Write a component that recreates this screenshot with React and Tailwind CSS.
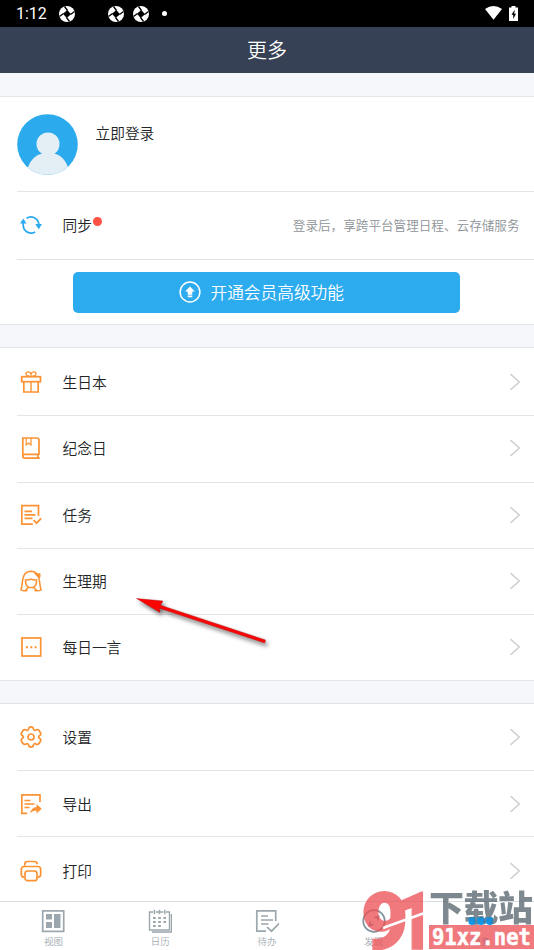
import React from "react";

const ORANGE = "#fb9233";

function Svg({ children, className = "w-[22px] h-[22px]", stroke = ORANGE, box = "0 0 22 22", width = 1.7 }) {
  return (
    <svg viewBox={box} className={`block shrink-0 ${className}`} fill="none" stroke={stroke} strokeWidth={width}>
      {children}
    </svg>
  );
}

const GiftIcon = () => (
  <Svg>
    <rect x="1.7" y="5.7" width="18.8" height="5" />
    <path d="M3.8 10.7V21h14.4V10.7" />
    <path d="M11 10.700V21M11 5.5C9 5.5 6 4.8 6 2.6 6 .2 10.2.3 11 3.2 11.8.3 16 .2 16 2.6c0 2.2-3 2.9-5 2.9z" strokeWidth="1.4" />
  </Svg>
);
const BookIcon = () => (
  <Svg>
    <path d="M19 17.8V3.2Q19 1 16.8 1H2.8v18.2q0 1.9 2 1.9H19.8M2.8 19q0-1.6 2-1.6H19.3M18 17.5V21" />
    <path d="M6.2 1v7L8.600 6 11 8V1" strokeWidth="1.2" />
  </Svg>
);
const TaskIcon = () => (
  <Svg>
    <path d="M18.5 12V1.700H1.8v18.500h11M4.500 7.300h7.500M4.500 10.800h11M4.500 14.300h8M13.500 16l3 3.200 4.700-4.800" />
  </Svg>
);
const GirlIcon = () => (
  <Svg>
    <path d="M7.500 20.300c-2 .8-5 .4-6.700-.5C3.500 15.500.2 1.500 11 1.300c10.800.2 7.500 14.200 10.200 18.500-1.700.9-4.700 1.300-6.700.5" strokeWidth="1.500" />
    <path d="M5.500 10q1.500.3 3-.3 2.500-.8 5 0 1.500.6 3 .3c.3 3.500-1 6.300-3.400 7.500H8.900C6.500 16.300 5.200 13.500 5.500 10zM5.500 20l3-2.500M16.500 20l-3-2.500" strokeWidth="1.500" />
    <path d="M14.300 2.500l3.300 1.500 2.500-.2-.2 3.700-3.100-1.500z" fill={ORANGE} strokeWidth="1" />
  </Svg>
);
const QuoteIcon = () => (
  <Svg>
    <rect x="2" y="2" width="18.700" height="18" />
    <path d="M6 11.200h2M10.300 11.200h2M14.600 11.200h2" strokeWidth="2" />
  </Svg>
);
const GearIcon = () => (
  <Svg>
    <path strokeLinejoin="round" d="M8.600 2.800Q8.800.9 11 .9T13.400 2.800Q13.800 4.800 15.700 4.100 17.700 3.100 18.900 4.300L20.700 7.200Q21.200 8.800 19.400 9.700 17.900 11 19.400 12.300 21.200 13.200 20.700 14.800L18.900 17.700Q17.700 18.900 15.700 17.900 13.800 17.200 13.400 19.200 13.200 21.100 11 21.100T8.600 19.200Q8.200 17.200 6.300 17.900 4.300 18.900 3.100 17.700L1.300 14.800Q.8 13.200 2.600 12.300 4.100 11 2.600 9.700.8 8.800 1.300 7.200L3.100 4.300Q4.300 3.100 6.300 4.100 8.200 4.800 8.600 2.800z" />
    <circle cx="11" cy="11" r="3" />
  </Svg>
);
const ExportIcon = () => (
  <Svg>
    <path d="M20 9V1.800H1.800v18.500h5.500M4.500 7.500h6M4.500 11h10M4.500 14.500h5" />
    <path d="M9.800 20q2.200-5.500 6.700-6v-3l5.200 4.800-5.200 4.700v-3q-3.500-.2-6.700 2.500z" fill={ORANGE} stroke="none" />
  </Svg>
);
const PrintIcon = () => (
  <Svg>
    <path d="M4.800 5.500V4.200q0-2.700 2.700-2.700h7q2.700 0 2.700 2.700M4 17.200q-2.700-.3-2.700-3V9.500q0-3 3-3h13.400q3 0 3 3v4.700q0 2.700-2.700 3" />
    <rect x="5" y="11" width="12" height="9.700" rx="2.500" />
  </Svg>
);

function Chevron() {
  return (
    <Svg className="w-[12px] h-[18px]" stroke="#cfd1d3" box="0 0 12 18" width={1.600}>
      <path d="M1.500 1.200L10.300 9 1.500 16.800" />
    </Svg>
  );
}

function Row({ icon, label, height, last, pad = "pb-px" }) {
  return (
    <div className={`${height} shrink-0 ${last ? "border-b border-[#e2e5e8]" : ""} pl-[17px]`}>
      <div className={`h-full flex items-center pl-[3px] pr-[13px] ${pad} ${last ? "" : "border-b border-[#e2e5e8]"}`}>
        {icon}
        <span className="ml-[20.500px] grow text-[14.700px] leading-5">{label}</span>
        <Chevron />
      </div>
    </div>
  );
}

function Aperture({ className = "" }) {
  return (
    <svg viewBox="0 0 16 16" className={`w-4 h-4 ${className}`}>
      <circle cx="8" cy="8" r="8" fill="#fff" />
      <path d="M8.300 4L12 8.300 7.700 12 4 7.700z" fill="#000" />
      <path d="M8.500 4.500L5.500.5M11.500 8.500L15.500 5.500M7.500 11.500L10.500 15.500M4.500 7.500L.5 10.500" stroke="#000" strokeWidth="1.300" fill="none" />
    </svg>
  );
}

function StatusBar() {
  return (
    <div className="h-[27px] shrink-0 bg-black flex items-center pl-4 pr-[16px] text-white">
      <span className="w-[43px] font-['Roboto'] text-[16px] font-normal leading-5">1:12</span>
      <Aperture />
      <Aperture className="ml-[33px]" />
      <Aperture className="ml-[8.500px]" />
      <span className="ml-[13.500px] w-[5px] h-[5px] rounded-full bg-white" />
      <span className="grow" />
      <svg viewBox="0 0 17 14" className="w-[17px] h-[14px] mb-px">
        <path d="M0 3Q8.500-2.800 17 3L8.500 13.800z" fill="#fff" />
      </svg>
      <svg viewBox="0 0 9 15" className="w-[9px] h-[15px] ml-[7px] mb-px">
        <path d="M2.500 0h4v1.500H9V15H0V1.500h2.500z" fill="#fff" />
        <path d="M5.700 3.800L2.500 8.700h1.700V13L7 7.800H5.300z" fill="#000" />
      </svg>
    </div>
  );
}

function Tab({ label, children }) {
  return (
    <div className="flex-1 flex flex-col items-center pt-[7px] text-[#a2acb2]">
      {children}
      <span className="mt-px text-[9.500px] leading-[14px]">{label}</span>
    </div>
  );
}

function TabBar() {
  const c = "#9ba7ad";
  const size = "w-6 h-6";
  const box = "0 0 24 24";
  return (
    <div className="h-[49px] shrink-0 border-t border-[#d8dde1] bg-white flex">
      <Tab label="视图">
        <Svg className={size} stroke={c} box={box}>
          <rect x="1.700" y="1.900" width="21" height="20.500" />
          <path d="M5 5h6v5.500H5zM5 13h6v6H5zM13 5h6.500v14H13z" fill={c} stroke="none" />
        </Svg>
      </Tab>
      <Tab label="日历">
        <Svg className={size} stroke={c} box={box}>
          <path d="M5 3H1.500v18h20V3H18M7.500 3h8M6.300.8v4.400M11.500.8v4.400M16.800.8v4.400M23.500 5v18H4" strokeWidth="1.400" />
          <path d="M5 9h13M5 13h13M5 17h8.500" strokeWidth="2.200" strokeDasharray="2.700 2.500" />
        </Svg>
      </Tab>
      <Tab label="待办">
        <Svg className={size} stroke={c} box={box}>
          <path d="M20.700 12V1.900H1.800v20.300H11M6 7h7M6 11h12M6 15h7.500M12 18l4.500 4.200L24.500 14" />
        </Svg>
      </Tab>
      <Tab label="发现">
        <Svg className={size} stroke="#84949c" box={box}>
          <circle cx="12" cy="12" r="10.800" />
          <path d="M12.500 8.500l4-1-1 4M11.500 15.500l-4 1 1-4" />
        </Svg>
      </Tab>
      <Tab label={<span className="text-[#2babee]">更多</span>}>
        <Svg className={size} stroke="none" box={box}>
          <g fill="#0b9df0"><circle cx="3" cy="12" r="4" /><circle cx="12" cy="12" r="4" /><circle cx="21" cy="12" r="4" /></g>
        </Svg>
      </Tab>
    </div>
  );
}

function Watermark() {
  return (
    <div className="absolute left-[362px] top-[888px] w-[172px] h-[62px] overflow-hidden">
      <svg viewBox="362 888 172 62" className="w-[172px] h-[62px] block">
        <g opacity="0.76">
          <g fill="#ec5055" stroke="#ec5055" fontFamily="Roboto" fontWeight="900" fontSize="80">
            <text transform="translate(361 948.500) scale(1.020 1)" strokeWidth="1.500">9</text>
            <text transform="translate(397 948.500) scale(0.780 1)" strokeWidth="1.500">1</text>
          </g>
          <path d="M383 928Q402 921 426 912.500" stroke="#fff" strokeWidth="2.500" fill="none" />
          <rect x="429" y="925" width="105" height="24" fill="#ec5055" />
          <text transform="translate(429 920.500)" fontFamily="Noto Sans CJK SC" fontWeight="900" fontSize="35" textLength="104" fill="#55646d">下载站</text>
        </g>
        <path d="M468.500 920.500h24" stroke="#1496e8" strokeWidth="6" strokeDasharray="7 1.500" opacity=".85" />
        <text x="432" y="945" fontFamily="DejaVu Sans Mono" fontWeight="bold" fontSize="22.500" textLength="99" lengthAdjust="spacingAndGlyphs" fill="#fff" stroke="#fff" strokeWidth=".5">91xz.net</text>
      </svg>
    </div>
  );
}

function Arrow() {
  return (
    <svg viewBox="0 0 150 70" className="absolute left-[130px] top-[587px] w-[150px] h-[70px]">
      <g style={{ filter: "drop-shadow(2px 3px 2px rgba(0,0,0,.55))" }}>
        <path d="M6.500 11.500L33 14 30.500 18.200 135.500 53 134.700 56 29.500 21.300 30 25.500z" fill="#fb0505" stroke="#a40d0d" strokeWidth=".4" />
      </g>
    </svg>
  );
}

export default function App() {
  return (
    <div className="relative w-[534px] h-[950px] overflow-hidden flex flex-col bg-white font-[350] text-[#222426] font-['Noto_Sans_CJK_SC',sans-serif]">
      <StatusBar />
      <header className="h-[46px] shrink-0 bg-[#374155] flex items-center justify-center text-white text-[20px] leading-6">更多</header>
      <main className="flex-1 min-h-0 overflow-hidden flex flex-col">
        <div className="h-6 shrink-0 bg-[#f5f7fa] border-b border-[#e4e8eb]" />
        <div className="h-[95px] shrink-0 pl-[17px]">
          <div className="h-full flex border-b border-[#e2e5e8]">
            <svg viewBox="0 0 61 61" className="w-[61px] h-[61px] mt-[16.500px]">
              <defs><clipPath id="face"><circle cx="30.500" cy="30.500" r="30.300" /></clipPath></defs>
              <g clipPath="url(#face)">
                <rect width="61" height="61" fill="#2babee" />
                <path d="M11 61V53Q15 42 25 39.500q-5.500-3-5.500-9.500a11.500 11.500 0 0 1 23 0q0 6.500-5 9.500Q47 42 51 53v8z" fill="#e3eef5" />
              </g>
            </svg>
            <span className="ml-[17.500px] mt-[26px] text-[14.700px] leading-5">立即登录</span>
          </div>
        </div>
        <div className="h-[68px] shrink-0 pl-[17px]">
          <div className="h-full flex items-center border-b border-[#dce2e6] pl-[3px] pr-[14.500px] pb-[2px]">
            <Svg stroke="#2babee">
              <path d="M3.200 8.500v3a8 8 0 0 0 12 6.500M6.500 4.300A8 8 0 0 1 18.800 10v3.500" strokeWidth="1.800" />
              <path d="M0 9.500L3.300 4.500l3.200 5zM15.300 10h6.700L18.700 15.300z" fill="#2babee" stroke="none" />
            </Svg>
            <span className="ml-[20.500px] text-[14.700px] leading-5">同步</span>
            <span className="ml-[1.500px] mb-[7px] w-[9px] h-[9px] rounded-full bg-[#ff5246]" />
            <span className="ml-auto text-[12.600px] leading-5 text-[#8d9397]">登录后，享跨平台管理日程、云存储服务</span>
          </div>
        </div>
        <div className="h-[64px] shrink-0 pt-[12px] pl-[73px] pr-[74px]">
          <button className="w-full h-[40.500px] rounded-[5px] bg-[#2cabee] text-white flex items-center justify-center pr-[10px]">
            <svg viewBox="0 0 22 22" className="w-[22px] h-[22px] shrink-0">
              <circle cx="11" cy="11" r="9.900" fill="none" stroke="#fff" strokeWidth="1.500" />
              <path d="M11 5.500l5 5h-2.700v3.300H8.700v-3.300H6zM8.700 14.600h4.600v1.600H8.700z" fill="#fff" />
            </svg>
            <span className="ml-[9.500px] text-[16.700px] leading-6">开通会员高级功能</span>
          </button>
        </div>
        <div className="h-6 shrink-0 bg-[#f5f7fa] border-y border-[#dfe3e7]" />
        <Row icon={<GiftIcon />} label="生日本" height="h-[68px]" pad="pb-0" />
        <Row icon={<BookIcon />} label="纪念日" height="h-[67px]" pad="pb-[2px]" />
        <Row icon={<TaskIcon />} label="任务" height="h-[66px]" />
        <Row icon={<GirlIcon />} label="生理期" height="h-[66px]" />
        <Row icon={<QuoteIcon />} label="每日一言" height="h-[66px]" last />
        <div className="h-[23px] shrink-0 bg-[#f5f7fa] border-b border-[#dfe3e7]" />
        <Row icon={<GearIcon />} label="设置" height="h-[67px]" />
        <Row icon={<ExportIcon />} label="导出" height="h-[66px]" pad="pb-0" />
        <Row icon={<PrintIcon />} label="打印" height="h-[70px]" />
      </main>
      <TabBar />
      <Arrow />
      <Watermark />
    </div>
  );
}
